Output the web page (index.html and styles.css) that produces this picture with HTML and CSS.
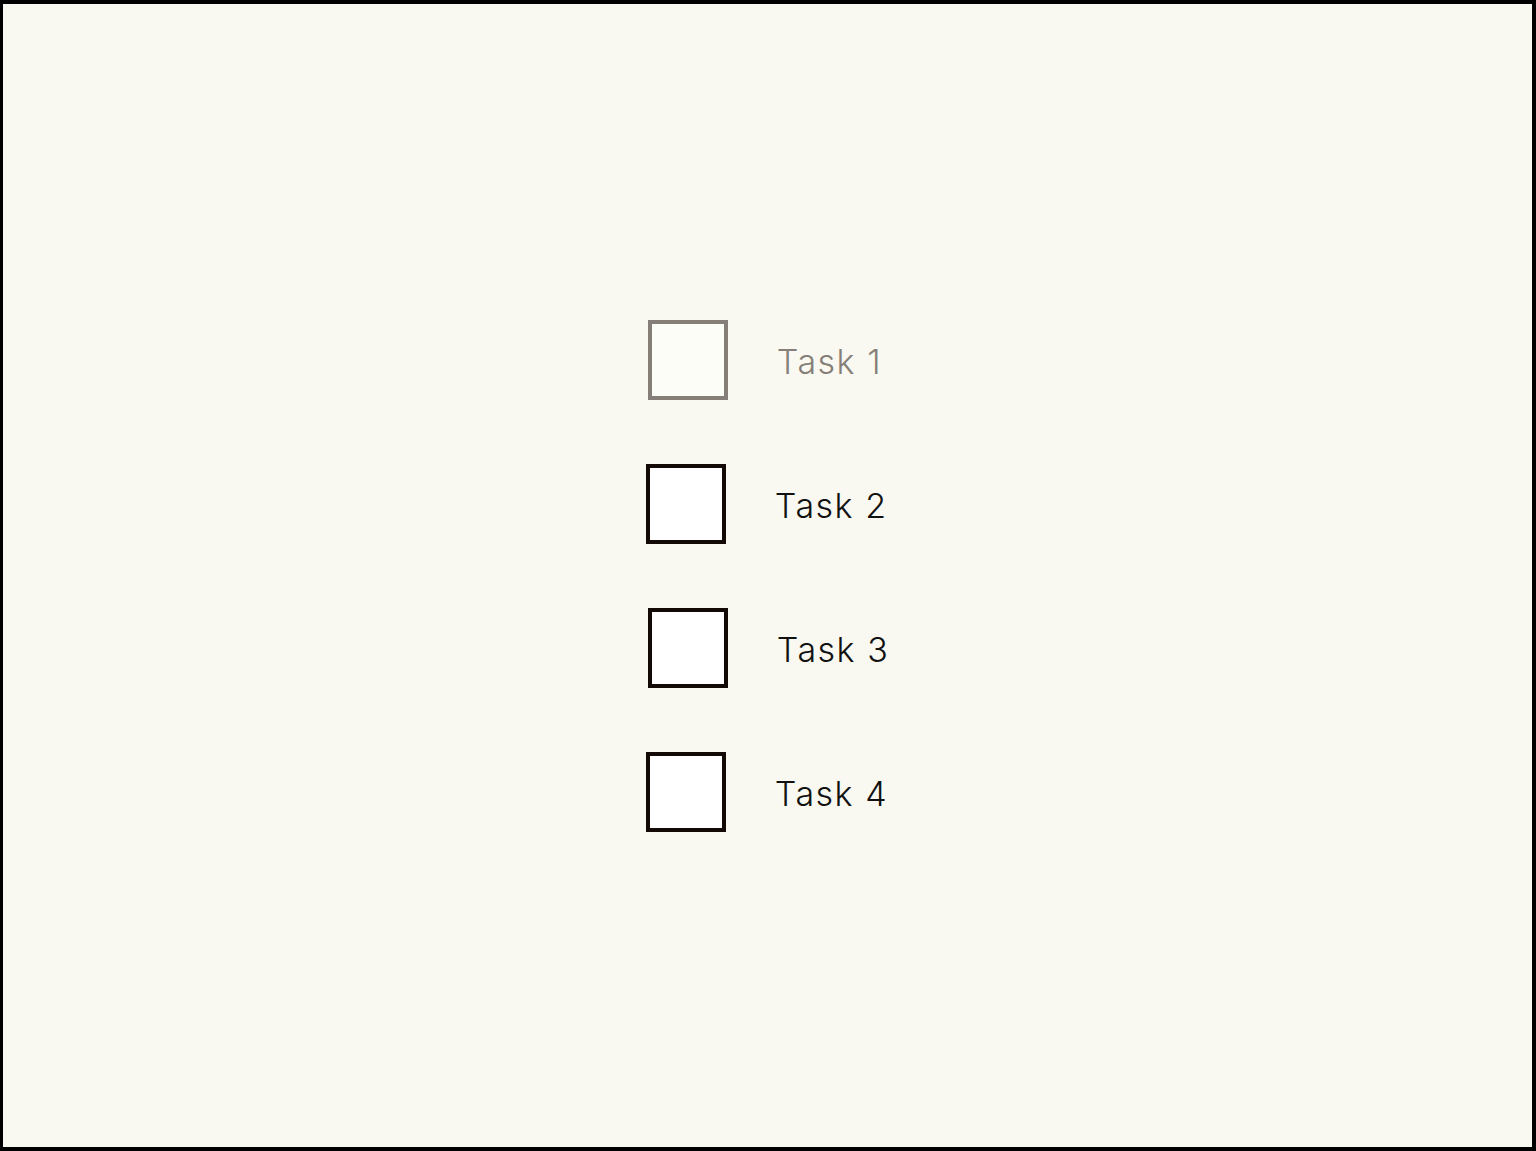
FILE: index.html
```html
<!DOCTYPE html>
<html lang="en">
<head>
    <meta charset="UTF-8">
    <meta name="viewport" content="width=device-width, initial-scale=1.0">
    <link rel="stylesheet" href="styles.css">
    <title>Tasks</title>
</head>
<body>
    <div class="frame">
        <ul class="task-list">
            <li class="task task-done task-shift">
                <span class="task-box"></span>
                <span class="task-label">Task 1</span>
            </li>
            <li class="task">
                <span class="task-box"></span>
                <span class="task-label">Task 2</span>
            </li>
            <li class="task task-shift">
                <span class="task-box"></span>
                <span class="task-label">Task 3</span>
            </li>
            <li class="task">
                <span class="task-box"></span>
                <span class="task-label">Task 4</span>
            </li>
        </ul>
    </div>
</body>
</html>
```

FILE: styles.css
```css
html, body {
    height: 100%;
    margin: 0;
}

body {
    font-family: Inter, "Liberation Sans", sans-serif;
    background-color: #faf9f1;
}

.frame {
    box-sizing: border-box;
    height: 100%;
    border: 4px solid #000;
    border-left-width: 3px;
    display: flex;
    align-items: center;
    justify-content: center;
}

.task-list {
    list-style: none;
    margin: 0;
    padding: 0;
    display: flex;
    flex-direction: column;
    gap: 64px;
}

.task {
    display: flex;
    align-items: center;
    gap: 49px;
}

.task-shift {
    margin-left: 2px;
}

.task-box {
    box-sizing: border-box;
    width: 80px;
    height: 80px;
    border: 4px solid #140a05;
    background-color: #fff;
}

.task-label {
    font-size: 34px;
    font-weight: 350;
    letter-spacing: 1.5px;
    padding-top: 3px;
    color: #111;
}

.task-done .task-box {
    border-color: #857f78;
    background-color: #fdfdf8;
}

.task-done .task-label {
    color: #857f78;
}
```
